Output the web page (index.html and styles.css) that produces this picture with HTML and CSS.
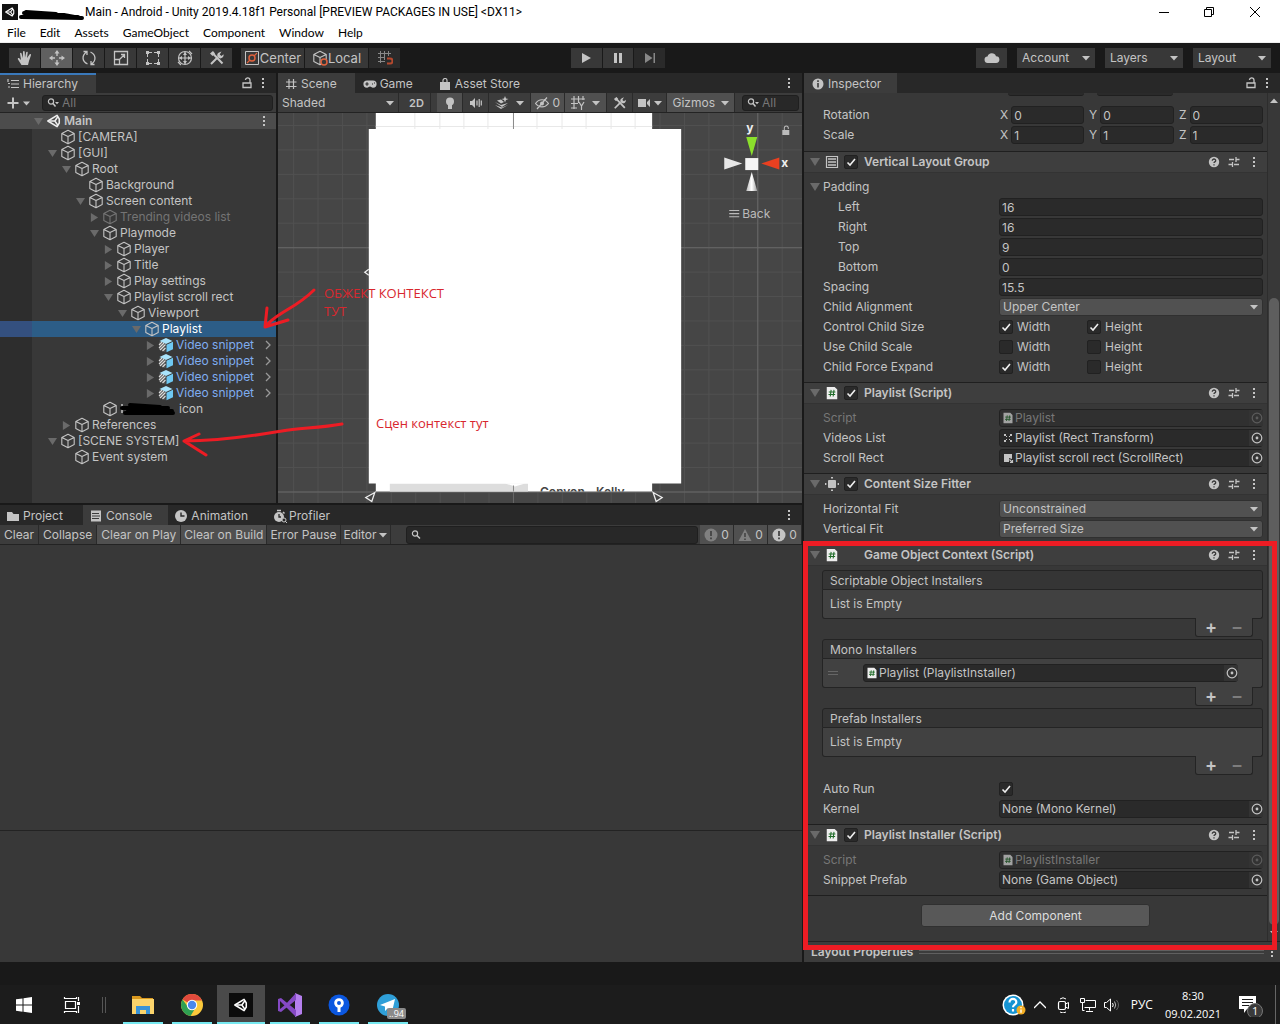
FILE: index.html
```html
<!DOCTYPE html>
<html lang="en">
<head>
<meta charset="utf-8">
<title>Main - Android - Unity 2019.4.18f1 Personal</title>
<link rel="stylesheet" href="styles.css">
</head>
<body>
<svg class="defs" aria-hidden="true">
  <defs>
    <symbol id="cube" viewBox="0 0 16 16"><path d="M8 1.200 14.200 4.400v7.200L8 14.800 1.800 11.600V4.400zM1.800 4.400 8 7.600l6.200-3.200M8 7.600v7.200" fill="none" stroke="currentColor" stroke-width="1.100" stroke-linejoin="round"/></symbol>
    <symbol id="prefab" viewBox="0 0 16 16"><path d="M8 1 14.500 4 8 7 1.500 4z" fill="#a9e3fb"/><path d="M8.500 7.800 15 4.800v7.400l-6.500 3z" fill="#6fc8f2"/><path d="M1 5l6.500 3v7.200L1 12.200z" fill="#555"/><path d="M1 8l3-3M1 11l5-5M2 13l5.500-5.500M4.500 14l3-3" stroke="#ddd" stroke-width="1.100"/></symbol>
    <symbol id="unity" viewBox="0 0 16 16"><path d="M1 8 11.500 1.500 14 5.500v5L11.500 14.500z" fill="none" stroke="currentColor" stroke-width="1.800" stroke-linejoin="round"/><path d="M3 8h6M9 8l3.500-5M9 8l3.500 5" stroke="currentColor" stroke-width="1.800"/></symbol>
    <symbol id="down" viewBox="0 0 10 10"><path d="M0 1h10L5 9z" fill="currentColor"/></symbol>
    <symbol id="right" viewBox="0 0 10 10"><path d="M1 0v10l8-5z" fill="currentColor"/></symbol>
    <symbol id="caret" viewBox="0 0 8 8"><path d="M0 2h8L4 6.500z" fill="currentColor"/></symbol>
    <symbol id="dots" viewBox="0 0 4 12"><path d="M1 1h2v2H1zM1 5h2v2H1zM1 9h2v2H1z" fill="currentColor"/></symbol>
    <symbol id="lock" viewBox="0 0 12 12"><path d="M2 6h8v4.500H2zM9 6V3.500a2.300 2.300 0 0 0-4.600-.5" fill="none" stroke="currentColor" stroke-width="1.300"/></symbol>
    <symbol id="help" viewBox="0 0 12 12"><circle cx="6" cy="6" r="5.200" fill="currentColor"/><path d="M4.300 4.700c0-2.300 3.500-2.200 3.400 0 0 1.200-1.700 1.200-1.700 2.300M6 8.200v1.300" fill="none" stroke="#3a3a3a" stroke-width="1.300"/></symbol>
    <symbol id="sliders" viewBox="0 0 12 12"><path d="M1 3.500h5M8 3.500h3.500M8 1v5M.5 8.500h4M6 8.500h5M4.500 6v5" stroke="currentColor" stroke-width="1.300"/></symbol>
    <symbol id="script" viewBox="0 0 14 16"><path d="M1 1h9l3 3v11H1z" fill="#eee"/><path d="M6 4.500l-1 7.500M9.300 4.500l-1 7.500M3.300 6.800h7.600M3 9.800h7.600" stroke="#1f6b28" stroke-width="1.200"/></symbol>
    <symbol id="target" viewBox="0 0 12 12"><circle cx="6" cy="6" r="4.800" fill="none" stroke="currentColor" stroke-width="1.200"/><circle cx="6" cy="6" r="1.400" fill="currentColor"/></symbol>
    <symbol id="search" viewBox="0 0 12 12"><circle cx="4" cy="4.500" r="2.600" fill="none" stroke="currentColor" stroke-width="1.200"/><path d="M6 6.500l3 3" stroke="currentColor" stroke-width="1.500"/></symbol>
    <symbol id="searchd" viewBox="0 0 12 12"><circle cx="4" cy="4.500" r="2.600" fill="none" stroke="currentColor" stroke-width="1.200"/><path d="M6 6.500l2.500 3" stroke="currentColor" stroke-width="1.500"/><path d="M8 5h4l-2 2.200z" fill="currentColor"/></symbol>
    <symbol id="tools" viewBox="0 0 16 16"><path d="M2 14 9 7M3 2.500l10.500 11" stroke="currentColor" stroke-width="2"/><path d="M10 2.500a3.200 3.200 0 0 0-1.500 4l1.500 1.500a3.200 3.200 0 0 0 4.500-3.800l-2 1.800-1.800-1.500L12.500 1.500z" fill="currentColor"/><path d="M1 3.500 4 1l2 2.500L3.500 6z" fill="currentColor"/></symbol>
    <symbol id="hash" viewBox="0 0 12 12"><path d="M4 1v10M8.500 1v10M1 4h10.500M1 8.500h10.500" stroke="currentColor" stroke-width="1.200"/></symbol>
    <symbol id="log" viewBox="0 0 14 14"><circle cx="7" cy="7" r="6.500" fill="currentColor"/><path d="M7 3v5M7 9.500v1.700" stroke="#444" stroke-width="1.800"/></symbol>
  </defs>
</svg>

<div class="app">
  <header class="titlebar">
    <svg class="app-icon" viewBox="0 0 16 16"><path d="M0 0h16v16H0z" fill="#111"/><use href="#unity" x="3" y="3" width="10" height="10" color="#fff"/></svg>
    <svg class="scribble" viewBox="0 0 66 16"><path d="M3 13l61 1M6 9l40 2 16 3M8 8l30 2M6 12l54 1" fill="none" stroke="#000" stroke-width="4" stroke-linecap="round"/></svg>
    <h1>Main - Android - Unity 2019.4.18f1 Personal [PREVIEW PACKAGES IN USE] &lt;DX11&gt;</h1>
    <div class="window-buttons">
      <button aria-label="Minimize"><svg viewBox="0 0 12 12"><path d="M1 6.500h10" stroke="#000"/></svg></button>
      <button aria-label="Restore"><svg viewBox="0 0 12 12"><path d="M1.500 3.500h7v7h-7zM3.500 3V1.500h7v7H9" fill="none" stroke="#000"/></svg></button>
      <button aria-label="Close"><svg viewBox="0 0 12 12"><path d="M1 1l10 10M11 1L1 11" stroke="#000"/></svg></button>
    </div>
  </header>
  <nav class="menubar">
    <button>File</button><button>Edit</button><button>Assets</button><button>GameObject</button><button>Component</button><button>Window</button><button>Help</button>
  </nav>

  <div class="toolbar">
    <div class="tool-group">
      <button class="tool" aria-label="Hand"><svg viewBox="0 0 16 16"><path d="M4.500 15 1 9.500c-.8-1.300.7-2 1.500-1L4 10 3 3.500c0-1 1.300-1.200 1.600 0L5.800 8 6 1.800c.1-1.200 1.600-1.200 1.700 0L8 7.500l1.200-5.200c.4-1.100 1.700-.7 1.500.4L10 8l2.500-3.500c.8-.9 1.900-.1 1.400.9L12 11l-1 4z" fill="currentColor"/></svg></button>
      <button class="tool on" aria-label="Move"><svg viewBox="0 0 16 16"><path d="M8 0l2.500 3.500h-5zM8 16l2.500-3.500h-5zM0 8l3.500-2.500v5zM16 8l-3.500-2.500v5z" fill="currentColor"/><path d="M8 3v3M8 10v3M3 8h3M10 8h3" stroke="currentColor" stroke-width="1.400"/></svg></button>
      <button class="tool" aria-label="Rotate"><svg viewBox="0 0 16 16"><path d="M6.500 14C1 11.500.5 5.500 5.500 2M9.500 2c5.500 2.500 6 8.500 1 12M2.500 1.500h3.500v3.500M13.500 14.500H10V11" fill="none" stroke="currentColor" stroke-width="1.300"/></svg></button>
      <button class="tool" aria-label="Scale"><svg viewBox="0 0 16 16"><path d="M1.500 1.500h13v13h-13zM1.500 9.500h5v5M6.500 9.500l5-5M8 4.500h3.500V8" fill="none" stroke="currentColor" stroke-width="1.300"/></svg></button>
      <button class="tool" aria-label="Rect"><svg viewBox="0 0 16 16"><path d="M4 2.500h8M4 13.500h8M2.500 4v8M13.500 4v8" stroke="currentColor" stroke-dasharray="3 2"/><path d="M1 1h3v3H1zM12 1h3v3h-3zM1 12h3v3H1zM12 12h3v3h-3z" fill="currentColor"/></svg></button>
      <button class="tool" aria-label="Transform"><svg viewBox="0 0 16 16"><circle cx="8" cy="8" r="6.500" fill="none" stroke="currentColor" stroke-width="1.200"/><path d="M8 2v12M2 8h12M1 12l3 3M12 1l3 3" stroke="currentColor" stroke-width="1.200"/><path d="M8 2l2 3H6zM8 14l2-3H6zM2 8l3-2v4zM14 8l-3-2v4z" fill="currentColor"/></svg></button>
      <button class="tool" aria-label="Custom tools"><svg viewBox="0 0 16 16"><use href="#tools"/></svg></button>
      <button class="tool wide first">
        <svg viewBox="0 0 16 16"><path d="M1.500 1.500h13v13h-13z" fill="none" stroke="currentColor"/><circle cx="8" cy="8" r="3" fill="none" stroke="#e0623d" stroke-width="1.500"/><path d="M3 13l3-3M10 6l3-3" stroke="#e0623d" stroke-width="1.200"/></svg>Center</button>
      <button class="tool wide"><svg viewBox="0 0 16 16"><use href="#cube"/><circle cx="12" cy="12" r="3" fill="#383838" stroke="#e0623d" stroke-width="1.500"/></svg>Local</button>
      <button class="tool dim" aria-label="Snap"><svg viewBox="0 0 16 16"><path d="M3.500 1v12M7.500 1v9M11.500 1v5M1 3.500h13M1 7.500h7M1 11.500h7" stroke="currentColor"/><path d="M10 8.500h3a2.200 2.200 0 0 1 0 5h-3" fill="none" stroke="#b5492e" stroke-width="2"/></svg></button>
    </div>
    <div class="play-group">
      <button class="tool" aria-label="Play"><svg viewBox="0 0 16 16"><path d="M4 3l9 5-9 5z" fill="currentColor"/></svg></button>
      <button class="tool" aria-label="Pause"><svg viewBox="0 0 16 16"><path d="M4 3h3v10H4zM9 3h3v10H9z" fill="currentColor"/></svg></button>
      <button class="tool dim" aria-label="Step"><svg viewBox="0 0 16 16"><path d="M3 3l7.500 5L3 13zM11.500 3h1.500v10h-1.500z" fill="currentColor"/></svg></button>
    </div>
    <div class="account-group">
      <button class="tool" aria-label="Cloud"><svg viewBox="0 0 16 16"><path d="M4 13a3.200 3.200 0 0 1-.5-6.400 4.500 4.500 0 0 1 8.500-.4A3.400 3.400 0 0 1 12 13z" fill="currentColor"/></svg></button>
      <button class="drop">Account<svg class="caret"><use href="#caret"/></svg></button>
      <button class="drop">Layers<svg class="caret"><use href="#caret"/></svg></button>
      <button class="drop">Layout<svg class="caret"><use href="#caret"/></svg></button>
    </div>
  </div>

  <main class="workspace">
    <div class="left">
      <section class="panel hierarchy">
        <div class="tabs">
          <button class="tab active focus"><svg viewBox="0 0 12 12"><path d="M4 2.500h8M4 6h8M4 9.500h8M1 1v3M1 5.500h2M1 9h2" stroke="currentColor" stroke-width="1.200"/></svg>Hierarchy</button>
          <svg class="lock push"><use href="#lock"/></svg><svg class="dots"><use href="#dots"/></svg>
        </div>
        <div class="bar">
          <button class="add" aria-label="Create"><svg viewBox="0 0 24 12"><path d="M6 0.500v11M0.500 6h11" stroke="currentColor" stroke-width="2"/><path d="M16 4.500h7l-3.500 4z" fill="currentColor"/></svg></button>
          <label class="search"><svg><use href="#searchd"/></svg><input type="text" placeholder="All" aria-label="Search hierarchy"></label>
        </div>
        <ul class="tree">
          <li class="row scene d0"><svg class="fold"><use href="#down"/></svg><svg class="ico"><use href="#unity" x="1" y="1" width="14" height="14"/></svg><span>Main</span><svg class="dots push"><use href="#dots"/></svg></li>
          <li class="row d1"><i class="fold"></i><svg class="ico"><use href="#cube"/></svg><span>[CAMERA]</span></li>
          <li class="row d1"><svg class="fold"><use href="#down"/></svg><svg class="ico"><use href="#cube"/></svg><span>[GUI]</span></li>
          <li class="row d2"><svg class="fold"><use href="#down"/></svg><svg class="ico"><use href="#cube"/></svg><span>Root</span></li>
          <li class="row d3"><i class="fold"></i><svg class="ico"><use href="#cube"/></svg><span>Background</span></li>
          <li class="row d3"><svg class="fold"><use href="#down"/></svg><svg class="ico"><use href="#cube"/></svg><span>Screen content</span></li>
          <li class="row d4 off"><svg class="fold"><use href="#right"/></svg><svg class="ico"><use href="#cube"/></svg><span>Trending videos list</span></li>
          <li class="row d4"><svg class="fold"><use href="#down"/></svg><svg class="ico"><use href="#cube"/></svg><span>Playmode</span></li>
          <li class="row d5"><svg class="fold"><use href="#right"/></svg><svg class="ico"><use href="#cube"/></svg><span>Player</span></li>
          <li class="row d5"><svg class="fold"><use href="#right"/></svg><svg class="ico"><use href="#cube"/></svg><span>Title</span></li>
          <li class="row d5"><svg class="fold"><use href="#right"/></svg><svg class="ico"><use href="#cube"/></svg><span>Play settings</span></li>
          <li class="row d5"><svg class="fold"><use href="#down"/></svg><svg class="ico"><use href="#cube"/></svg><span>Playlist scroll rect</span></li>
          <li class="row d6"><svg class="fold"><use href="#down"/></svg><svg class="ico"><use href="#cube"/></svg><span>Viewport</span></li>
          <li class="row d7 selected"><svg class="fold"><use href="#down"/></svg><svg class="ico"><use href="#cube"/></svg><span>Playlist</span></li>
          <li class="row d8 prefab"><svg class="fold"><use href="#right"/></svg><svg class="ico"><use href="#prefab"/></svg><span>Video snippet</span><svg class="enter push" viewBox="0 0 8 10"><path d="M2 1l4 4-4 4" fill="none" stroke="currentColor" stroke-width="1.300"/></svg></li>
          <li class="row d8 prefab"><svg class="fold"><use href="#right"/></svg><svg class="ico"><use href="#prefab"/></svg><span>Video snippet</span><svg class="enter push" viewBox="0 0 8 10"><path d="M2 1l4 4-4 4" fill="none" stroke="currentColor" stroke-width="1.300"/></svg></li>
          <li class="row d8 prefab"><svg class="fold"><use href="#right"/></svg><svg class="ico"><use href="#prefab"/></svg><span>Video snippet</span><svg class="enter push" viewBox="0 0 8 10"><path d="M2 1l4 4-4 4" fill="none" stroke="currentColor" stroke-width="1.300"/></svg></li>
          <li class="row d8 prefab"><svg class="fold"><use href="#right"/></svg><svg class="ico"><use href="#prefab"/></svg><span>Video snippet</span><svg class="enter push" viewBox="0 0 8 10"><path d="M2 1l4 4-4 4" fill="none" stroke="currentColor" stroke-width="1.300"/></svg></li>
          <li class="row d4"><i class="fold"></i><svg class="ico"><use href="#cube"/></svg><svg class="smudge" viewBox="0 0 56 16"><path d="M2 3v9" stroke="#c4c4c4" stroke-width="1.500"/><path d="M2 7h46M10 4l30 2M5 12h48M8 9l44 1" fill="none" stroke="#000" stroke-width="4" stroke-linecap="round"/></svg><span>icon</span></li>
          <li class="row d2"><svg class="fold"><use href="#right"/></svg><svg class="ico"><use href="#cube"/></svg><span>References</span></li>
          <li class="row d1"><svg class="fold"><use href="#down"/></svg><svg class="ico"><use href="#cube"/></svg><span>[SCENE SYSTEM]</span></li>
          <li class="row d2"><i class="fold"></i><svg class="ico"><use href="#cube"/></svg><span>Event system</span></li>
        </ul>
      </section>

      <section class="panel scene-view">
        <div class="tabs">
          <button class="tab active"><svg><use href="#hash"/></svg>Scene</button>
          <button class="tab game"><svg viewBox="0 0 14 12"><path d="M4 2.500h6a3.600 3.600 0 0 1 0 7.200c-1.500 0-2-1.200-3-1.200s-1.500 1.200-3 1.200a3.600 3.600 0 0 1 0-7.200z" fill="currentColor"/><path d="M4 4.300v3.400M2.300 6h3.400M9 6h1M11 5h1" stroke="#282828" stroke-width="1.200"/></svg>Game</button>
          <button class="tab store"><svg viewBox="0 0 12 12"><path d="M1 4h10v8H1z" fill="currentColor"/><path d="M4 5V2.500a2 2 0 0 1 4 0V5" fill="none" stroke="currentColor" stroke-width="1.200"/></svg>Asset Store</button>
          <svg class="dots push"><use href="#dots"/></svg>
        </div>
        <div class="bar scene-bar">
          <button class="seg shaded">Shaded<svg class="caret"><use href="#caret"/></svg></button>
          <button class="seg two-d">2D</button>
          <button class="seg w26 on" aria-label="Lighting"><svg viewBox="0 0 14 14"><circle cx="7" cy="5.500" r="4" fill="currentColor"/><path d="M5 8h4v5H5z" fill="currentColor"/></svg></button>
          <button class="seg w26" aria-label="Audio"><svg viewBox="0 0 14 14"><path d="M1 5h2l3-3v10L3 9H1z" fill="currentColor"/><path d="M8 4.500v5M10.200 3v8M12.300 4.500v5" stroke="currentColor" stroke-width="1.200"/></svg></button>
          <button class="seg w42" aria-label="Effects"><svg viewBox="0 0 14 14"><path d="M0 6l6 3 7-2-6 4zM0 9l6 4 7-4-6 2.500zM2 4.500l4-1 3 2.500-3 1.500z" fill="currentColor"/><path d="M10 0l1 2.500L13.500 3 11 4l-1 2.500L9 4 6.500 3 9 2.500z" fill="currentColor"/></svg><svg class="caret"><use href="#caret"/></svg></button>
          <button class="seg w34 on">
            <svg viewBox="0 0 14 14"><path d="M0.500 7.500C4 2.500 10 2.500 13.500 7.500 10 12 4 12 .5 7.500zM2 13L12 1.500" fill="none" stroke="currentColor" stroke-width="1.200"/><circle cx="7" cy="7.500" r="2" fill="currentColor"/></svg>0</button>
          <button class="seg w42 on" aria-label="Grid"><svg viewBox="0 0 14 14"><path d="M3 0v13M7.500 0v7M12 0v4M0 3h14M0 7.500h7M0 12h6M8 6l2.500 4L13 6M10.500 10v4" fill="none" stroke="currentColor" stroke-width="1.200"/></svg><svg class="caret"><use href="#caret"/></svg></button>
          <button class="seg w26" aria-label="Tools"><svg viewBox="0 0 16 16"><use href="#tools"/></svg></button>
          <button class="seg w34" aria-label="Camera"><svg viewBox="0 0 14 14"><path d="M1 3h8v8H1zM10 6l3-3v8l-3-3z" fill="currentColor"/></svg><svg class="caret"><use href="#caret"/></svg></button>
          <button class="seg gizmos on">Gizmos<svg class="caret"><use href="#caret"/></svg></button>
          <label class="search"><svg><use href="#searchd"/></svg><input type="text" placeholder="All" aria-label="Search scene"></label>
        </div>
        <div class="canvas">
          <svg viewBox="0 0 524 390" preserveAspectRatio="xMidYMin slice">
            <defs>
              <pattern id="minor" x="-9" y="12" width="24.400" height="24.400" patternUnits="userSpaceOnUse"><path d="M.5 0v24.400M0 .5h24.400" stroke="#505050"/></pattern>
              <clipPath id="lower"><path d="M98 370h276v8H98z"/></clipPath>
              <linearGradient id="cone"><stop offset="0" stop-color="#bbb"/><stop offset=".5" stop-color="#fff"/><stop offset="1" stop-color="#999"/></linearGradient>
            </defs>
            <path d="M0 0h524v390H0z" fill="#464646"/>
            <path d="M0 0h524v390H0z" fill="url(#minor)"/>
            <path d="M235.500 0v390M479.500 0v390M0 134.500h524M0 378.500h524" stroke="#686868"/>
            <path d="M98 0h276v378H98z" fill="#fff"/>
            <path d="M137 0v16M162 0v16M186 0v16M210 0v16M259 0v16M284 0v16M308 0v16M333 0v16M357 0v16M98 13.500h276" stroke="#e8e8e8"/>
            <path d="M235.500 0v16" stroke="#888"/>
            <path d="M112 370h138v8H112z" fill="#ddd"/>
            <path d="M227 370h20l-10 3z" fill="#fff"/>
            <path d="M235.500 372v6" stroke="#888"/>
            <g clip-path="url(#lower)" fill="#444" font-family="Inter, sans-serif" font-size="12" font-weight="600"><text x="262" y="383">Conyon</text><text x="318" y="383">Kelly</text></g>
            <path d="M91 16h312v354H91z" fill="#fff"/>
            <path d="M97 379l-9 5 6 4zM375 379l9 5-6 4zM91 156l-4 3 4 3" fill="none" stroke="#eee" stroke-width="1.300"/>
            <path d="M468 24h11l-5.500 19z" fill="#8be02c"/><path d="M483 50.500l18-6v12z" fill="#ea4020"/>
            <path d="M464 50.500l-18-6v12z" fill="#e6e6e6"/><path d="M473.500 59l5.500 19h-11z" fill="url(#cone)"/><path d="M467 45h13v12h-13z" fill="#f4f4f4"/>
            <g fill="#eee" font-family="Inter, sans-serif" font-size="12" font-weight="700"><text x="468" y="19">y</text><text x="503" y="54">x</text></g>
            <path d="M504 17h7v5h-7z" fill="#bbb"/><path d="M506 17v-2a2 2 0 0 1 4 0v1" fill="none" stroke="#bbb"/>
            <path d="M451 97.500h10M451 100.500h10M451 103.500h10" stroke="#bbb"/>
            <text x="464" y="105" fill="#bbb" font-family="Inter, sans-serif" font-size="12">Back</text>
          </svg>
        </div>
      </section>

      <section class="panel console">
        <div class="tabs">
          <button class="tab project"><svg viewBox="0 0 12 12"><path d="M0 2h5l1.500 2H12v7H0z" fill="currentColor"/></svg>Project</button>
          <button class="tab active log"><svg viewBox="0 0 12 12"><path d="M1 .5h10v11H1z" fill="currentColor"/><path d="M2 3.500h7M2 6h8M2 8.500h7" stroke="#3c3c3c"/></svg>Console</button>
          <button class="tab anim"><svg viewBox="0 0 12 12"><circle cx="6" cy="6" r="6" fill="currentColor"/><path d="M6 2.500V6h3.500" fill="none" stroke="#282828" stroke-width="1.400"/></svg>Animation</button>
          <button class="tab prof"><svg viewBox="0 0 14 14"><circle cx="6" cy="8" r="5" fill="currentColor"/><path d="M4 1.500h4M10 3l1.500 1.500" stroke="currentColor" stroke-width="1.500"/><path d="M6 5v3h2" fill="none" stroke="#282828" stroke-width="1.300"/><circle cx="11" cy="11" r="2" fill="#282828" stroke="currentColor"/><path d="M12 12l2 2" stroke="currentColor"/></svg>Profiler</button>
          <svg class="dots push"><use href="#dots"/></svg>
        </div>
        <div class="bar console-bar">
          <button class="seg">Clear</button><button class="seg">Collapse</button><button class="seg on">Clear on Play</button><button class="seg on">Clear on Build</button><button class="seg">Error Pause</button><button class="seg">Editor<svg class="caret"><use href="#caret"/></svg></button>
          <label class="search"><svg><use href="#search"/></svg><input type="text" aria-label="Search console"></label>
          <button class="seg count on"><svg class="faded"><use href="#log"/></svg>0</button>
          <button class="seg count on"><svg class="faded" viewBox="0 0 14 14"><path d="M7 1l6.500 12H.5z" fill="currentColor"/><path d="M7 5v4M7 10.500V12" stroke="#444" stroke-width="1.600"/></svg>0</button>
          <button class="seg count on"><svg><use href="#log"/></svg>0</button>
        </div>
        <div class="entries"></div>
        <div class="detail"></div>
      </section>
    </div>

    <section class="panel inspector">
      <div class="tabs">
        <button class="tab active"><svg viewBox="0 0 12 12"><circle cx="6" cy="6" r="5.500" fill="currentColor"/><path d="M6 5v4.500M6 2.300V4" stroke="#3c3c3c" stroke-width="1.600"/></svg>Inspector</button>
        <svg class="lock push"><use href="#lock"/></svg><svg class="dots"><use href="#dots"/></svg>
      </div>
      <div class="scroller">
        <div class="components">
          <div class="cut"><i></i><i></i></div>
          <div class="transform">
            <div class="field"><span>Rotation</span><div class="xyz"><label>X<input value="0"></label><label>Y<input value="0"></label><label>Z<input value="0"></label></div></div>
            <div class="field"><span>Scale</span><div class="xyz"><label>X<input value="1"></label><label>Y<input value="1"></label><label>Z<input value="1"></label></div></div>
          </div>

          <div class="comp-head"><svg class="fold"><use href="#down"/></svg><svg class="kind" viewBox="0 0 14 14"><path d="M1.500 1.500h11v11h-11z" fill="none" stroke="currentColor" stroke-width="1.200"/><path d="M3 4h8M3 7h8M3 10h8" stroke="currentColor" stroke-width="1.600"/></svg><input type="checkbox" checked aria-label="Vertical Layout Group enabled"><h2>Vertical Layout Group</h2><svg class="act"><use href="#help"/></svg><svg class="act"><use href="#sliders"/></svg><svg class="dots"><use href="#dots"/></svg></div>
          <div class="comp-body">
            <div class="field group"><svg class="fold"><use href="#down"/></svg><span>Padding</span></div>
            <div class="field sub"><label for="pl">Left</label><input id="pl" value="16"></div>
            <div class="field sub"><label for="pr">Right</label><input id="pr" value="16"></div>
            <div class="field sub"><label for="pt">Top</label><input id="pt" value="9"></div>
            <div class="field sub"><label for="pb">Bottom</label><input id="pb" value="0"></div>
            <div class="field"><label for="sp">Spacing</label><input id="sp" value="15.5"></div>
            <div class="field"><label for="al">Child Alignment</label><select id="al"><option>Upper Center</option></select></div>
            <div class="field"><span>Control Child Size</span><div class="checks"><label><input type="checkbox" checked>Width</label><label><input type="checkbox" checked>Height</label></div></div>
            <div class="field"><span>Use Child Scale</span><div class="checks"><label><input type="checkbox">Width</label><label><input type="checkbox">Height</label></div></div>
            <div class="field"><span>Child Force Expand</span><div class="checks"><label><input type="checkbox" checked>Width</label><label><input type="checkbox">Height</label></div></div>
          </div>

          <div class="comp-head"><svg class="fold"><use href="#down"/></svg><svg class="kind"><use href="#script"/></svg><input type="checkbox" checked aria-label="Playlist enabled"><h2>Playlist (Script)</h2><svg class="act"><use href="#help"/></svg><svg class="act"><use href="#sliders"/></svg><svg class="dots"><use href="#dots"/></svg></div>
          <div class="comp-body">
            <div class="field disabled"><span>Script</span><div class="object"><svg><use href="#script"/></svg>Playlist<button aria-label="Pick"><svg><use href="#target"/></svg></button></div></div>
            <div class="field"><span>Videos List</span><div class="object"><svg viewBox="0 0 12 12"><path d="M2 2h2v2H2zM8 2h2v2H8zM2 8h2v2H2zM8 8h2v2H8zM4 4h1v1H4zM7 4h1v1H7zM4 7h1v1H4zM7 7h1v1H7z" fill="currentColor"/></svg>Playlist (Rect Transform)<button aria-label="Pick"><svg><use href="#target"/></svg></button></div></div>
            <div class="field"><span>Scroll Rect</span><div class="object"><svg viewBox="0 0 12 12"><path d="M2 2h8v5L7 6v4H2z" fill="currentColor"/><path d="M7.500 7.500L10 10M10.500 8v2.500H8" stroke="currentColor" fill="none" stroke-width="1.200"/></svg>Playlist scroll rect (ScrollRect)<button aria-label="Pick"><svg><use href="#target"/></svg></button></div></div>
          </div>

          <div class="comp-head"><svg class="fold"><use href="#down"/></svg><svg class="kind" viewBox="0 0 14 14"><rect x="3" y="3" width="8" height="8" rx="1" fill="currentColor"/><path d="M6 .7h2M6 13.300h2M.7 6v2M13.300 6v2" stroke="currentColor" stroke-width="1.400"/></svg><input type="checkbox" checked aria-label="Content Size Fitter enabled"><h2>Content Size Fitter</h2><svg class="act"><use href="#help"/></svg><svg class="act"><use href="#sliders"/></svg><svg class="dots"><use href="#dots"/></svg></div>
          <div class="comp-body">
            <div class="field"><label for="hf">Horizontal Fit</label><select id="hf"><option>Unconstrained</option></select></div>
            <div class="field"><label for="vf">Vertical Fit</label><select id="vf"><option>Preferred Size</option></select></div>
          </div>

          <div class="comp-head"><svg class="fold"><use href="#down"/></svg><svg class="kind"><use href="#script"/></svg><i class="no-check"></i><h2>Game Object Context (Script)</h2><svg class="act"><use href="#help"/></svg><svg class="act"><use href="#sliders"/></svg><svg class="dots"><use href="#dots"/></svg></div>
          <div class="comp-body">
            <div class="list"><h3>Scriptable Object Installers</h3><div class="items">List is Empty</div><div class="list-foot"><button>+</button><button disabled>−</button></div></div>
            <div class="list"><h3>Mono Installers</h3><div class="items"><i class="grip"></i><div class="object"><svg><use href="#script"/></svg>Playlist (PlaylistInstaller)<button aria-label="Pick"><svg><use href="#target"/></svg></button></div></div><div class="list-foot"><button>+</button><button disabled>−</button></div></div>
            <div class="list"><h3>Prefab Installers</h3><div class="items">List is Empty</div><div class="list-foot"><button>+</button><button disabled>−</button></div></div>
            <div class="field auto-run"><label for="ar">Auto Run</label><input id="ar" type="checkbox" checked></div>
            <div class="field"><span>Kernel</span><div class="object">None (Mono Kernel)<button aria-label="Pick"><svg><use href="#target"/></svg></button></div></div>
          </div>

          <div class="comp-head"><svg class="fold"><use href="#down"/></svg><svg class="kind"><use href="#script"/></svg><input type="checkbox" checked aria-label="Playlist Installer enabled"><h2>Playlist Installer (Script)</h2><svg class="act"><use href="#help"/></svg><svg class="act"><use href="#sliders"/></svg><svg class="dots"><use href="#dots"/></svg></div>
          <div class="comp-body">
            <div class="field disabled"><span>Script</span><div class="object"><svg><use href="#script"/></svg>PlaylistInstaller<button aria-label="Pick"><svg><use href="#target"/></svg></button></div></div>
            <div class="field"><span>Snippet Prefab</span><div class="object">None (Game Object)<button aria-label="Pick"><svg><use href="#target"/></svg></button></div></div>
          </div>
          <div class="add-row"><button class="add-component">Add Component</button></div>
        </div>
        <div class="scrollbar"><svg viewBox="0 0 8 8"><path d="M0 6h8L4 1.500z" fill="currentColor"/></svg><i></i><svg viewBox="0 0 8 8"><use href="#caret"/></svg></div>
      </div>
      <div class="preview"><h2>Layout Properties</h2><i></i><svg class="dots"><use href="#dots"/></svg></div>
      <div class="highlight"></div>
    </section>
  </main>

  <div class="status"></div>

  <footer class="taskbar">
    <button class="task" aria-label="Start"><svg viewBox="0 0 24 24"><path d="M4 6.300l6.500-.9v6H4zM11.500 5.200L20 4v7.400h-8.500zM4 12.600h6.500v6.100L4 17.800zM11.500 12.600H20V20l-8.500-1.200z" fill="#fff"/></svg></button>
    <button class="task" aria-label="Task view"><svg viewBox="0 0 24 24"><path d="M5.500 8.500h10v7h-10zM4.500 4v1.500h12V4M4.500 20v-1.500h12V20M18.500 4v4M18.500 13v7" fill="none" stroke="#fff" stroke-width="1.200"/><path d="M17 9h3v3h-3z" fill="#fff"/></svg></button>
    <i class="sep"></i>
    <button class="task running" aria-label="Explorer"><svg viewBox="0 0 24 24"><path d="M1 3h8l2 2h11v4H1z" fill="#d9981e"/><path d="M1 6h22v15H1z" fill="#fbd46b"/><path d="M5 13h14v8h-4v-4H9v4H5z" fill="#3a93d6"/></svg></button>
    <button class="task running" aria-label="Chrome"><svg viewBox="0 0 24 24"><circle cx="12" cy="12" r="11" fill="#fbc93b"/><path d="M12 12L2.500 6.500a11 11 0 0 1 19.500 1H12z" fill="#e14a3d"/><path d="M2.500 6.500a11 11 0 0 0 8 16.400L16 14l-8 0z" fill="#2fa052"/><circle cx="12" cy="12" r="5.200" fill="#fff"/><circle cx="12" cy="12" r="4.200" fill="#4a88ec"/></svg></button>
    <button class="task running current" aria-label="Unity"><svg viewBox="0 0 24 24"><path d="M0 0h24v24H0z" fill="#0c0c0c"/><use href="#unity" x="5" y="5" width="14" height="14" color="#fff"/></svg></button>
    <button class="task running" aria-label="Visual Studio"><svg viewBox="0 0 24 24"><path d="M17 0l7 3v18l-7 3z" fill="#b57fee"/><path d="M0 6l3-1 15 12v7L2 8v8l5-4 11-12v7L3 19l-3-1z" fill="#8549c4"/></svg></button>
    <button class="task running" aria-label="Sourcetree"><svg viewBox="0 0 24 24"><circle cx="12" cy="12" r="10.500" fill="#0b57e0"/><circle cx="12" cy="10" r="3.400" fill="none" stroke="#fff" stroke-width="2.800"/><path d="M12 13v6" stroke="#fff" stroke-width="3"/></svg></button>
    <button class="task running" aria-label="Telegram"><svg viewBox="0 0 24 24"><circle cx="12" cy="12" r="11" fill="#2f9fd8"/><path d="M4 12l15-6-3 13-4.500-3.500L9 18v-4.500z" fill="#fff"/></svg><span class="badge">..94</span></button>
    <div class="tray">
      <svg class="t24" viewBox="0 0 24 24"><circle cx="11" cy="12" r="10.500" fill="#fff"/><circle cx="11" cy="12" r="9" fill="#1593d2"/><path d="M7.500 9.500c0-5 7-4.500 6.800-.3 0 2.500-3.300 2.500-3.300 5M11 16v2.500" fill="none" stroke="#fff" stroke-width="2.200"/><circle cx="19" cy="17" r="4.500" fill="#f4ae24"/><path d="M19 14v1.200M19 16.500v3.200" stroke="#fff" stroke-width="1.400"/></svg>
      <svg class="t12" viewBox="0 0 12 12"><path d="M0 9l6-6 6 6" fill="none" stroke="#fff" stroke-width="1.300"/></svg>
      <svg class="t16" viewBox="0 0 16 16"><rect x="2.500" y="4.500" width="7" height="8" rx="1.500" fill="none" stroke="#fff" stroke-width="1.200"/><path d="M9.500 7l3-1.500v6l-3-1.500M4 2q3-2.500 6 0M4 15q3 2 6 0" fill="none" stroke="#fff"/></svg>
      <svg class="t16" viewBox="0 0 16 16"><path d="M5.500 3.500h10v7h-11M9.500 10.500v3M6 14.500h7M.5 1.500h4v4h-4zM2.500 5.500v8h2" fill="none" stroke="#fff"/></svg>
      <svg class="t16" viewBox="0 0 16 16"><path d="M.5 5.500h2l4-3.500v12l-4-3.500h-2z" fill="none" stroke="#fff"/><path d="M8.500 6q1.500 2 0 4" fill="none" stroke="#fff"/><path d="M10.500 4.500q2.500 3.500 0 7" fill="none" stroke="#bbb"/><path d="M12.500 3q4 5 0 10" fill="none" stroke="#666"/></svg>
      <span class="lang">РУС</span>
      <time class="clock"><span>8:30</span><span>09.02.2021</span></time>
      <svg class="t24 note" viewBox="0 0 24 24"><path d="M0 3h17v13H8l-3 4v-4H0z" fill="#fff"/><path d="M3 6.500h11M3 9.500h11M3 12.500h7" stroke="#1c1c1c"/><circle cx="16" cy="18" r="7.500" fill="#3a3a3a" stroke="#777"/><text x="13" y="22" font-family="Open Sans, sans-serif" font-size="11" fill="#fff">1</text></svg>
      <i class="peek"></i>
    </div>
  </footer>

  <svg class="marks" viewBox="0 0 500 500" aria-hidden="true">
    <path d="M314 290C302 302 290 308 282 313S270 321 266 326M267 308L265 327L288 320" fill="none" stroke="#ed1c24" stroke-width="3" stroke-linecap="round" stroke-linejoin="round"/>
    <path d="M342 424C320 428 300 428 282 431S225 441 184 441M199 434L184 441L206 455" fill="none" stroke="#ed1c24" stroke-width="3" stroke-linecap="round" stroke-linejoin="round"/>
  </svg>
  <p class="remark object-note">ОБЖЕКТ КОНТЕКСТ<br>ТУТ</p>
  <p class="remark scene-note">Сцен контекст тут</p>
</div>
</body>
</html>
```
FILE: styles.css
```css
* { box-sizing: border-box; }

body {
  margin: 0;
  background: #191919;
  color: #c4c4c4;
  font: 12px/16px Inter, "Liberation Sans", sans-serif;
}

button, input, select {
  margin: 0;
  padding: 0;
  border: 0;
  border-radius: 0;
  background: none;
  color: inherit;
  font: inherit;
}

h1, h2, h3, p, ul { margin: 0; padding: 0; font: inherit; }
svg { display: block; flex: none; }
i { display: block; flex: none; }
.defs { position: absolute; width: 0; height: 0; }
.push { margin-left: auto; }

.app { position: relative; display: flex; flex-direction: column; min-height: 100vh; }

/* Window frame */
.titlebar, .menubar {
  display: flex;
  align-items: center;
  background: #fff;
  color: #000;
  font: 12px/16px Lato, "Open Sans", sans-serif;
}
.titlebar { height: 24px; padding: 0 2px; font-family: Roboto, "Open Sans", sans-serif; }
.app-icon { width: 16px; height: 16px; }
.scribble { width: 66px; height: 16px; margin-right: 1px; }
.window-buttons { display: flex; margin-left: auto; }
.window-buttons button { display: grid; place-items: center; width: 46px; height: 20px; }
.window-buttons button:first-child { width: 45px; }
.window-buttons svg { width: 12px; height: 12px; }
.menubar { height: 19px; gap: 14px; padding-left: 7px; border-bottom: 1px solid #eee; }

/* Main toolbar */
.toolbar {
  display: grid;
  grid-template-columns: 571fr 94px 615fr;
  align-items: center;
  height: 30px;
  background: #191919;
}
.tool-group, .play-group, .account-group { display: flex; gap: 1px; }
.tool-group { padding-left: 9px; }
.account-group { justify-content: flex-end; gap: 10px; padding-right: 9px; }
.tool {
  display: flex;
  align-items: center;
  justify-content: center;
  width: 31px;
  height: 20px;
  background: #383838;
}
.tool svg { width: 16px; height: 16px; }
.tool.on { background: #606060; }
.tool.dim { background: #2a2a2a; color: #888; }
.tool.wide { width: 63px; font-size: 13px; }
.tool.first { margin-left: 8px; }
.drop { display: flex; align-items: center; justify-content: space-between; width: 78px; height: 20px; padding: 0 5px; background: #383838; }
.caret { width: 8px; height: 8px; }

/* Panels */
.workspace { flex: 1; display: grid; grid-template-columns: 802fr 476fr; gap: 2px; }
.left { display: grid; grid-template-columns: 276fr 524fr; grid-template-rows: 430fr 456fr; gap: 2px; min-width: 0; }
.console { grid-column: 1 / -1; }
.panel { display: flex; flex-direction: column; min-width: 0; background: #383838; }
.tabs { display: flex; align-items: center; height: 20px; padding-right: 11px; background: #282828; }
.tab { display: flex; align-items: center; gap: 4px; height: 20px; padding: 2px 18px 0 7px; }
.tab svg { width: 12px; height: 12px; }
.tab.active { background: #3c3c3c; }
.tab.focus { border-top: 2px solid #3a79bb; padding-top: 0; }
.dots { width: 4px; height: 12px; }
.lock { width: 12px; height: 12px; margin-right: 8px; }

.bar { display: flex; align-items: center; height: 20px; background: #3c3c3c; border-bottom: 1px solid #232323; }
.add { padding: 0 11px 0 7px; }
.add svg { width: 24px; height: 12px; }
.search {
  display: flex;
  flex: 1;
  align-items: center;
  gap: 3px;
  min-width: 0;
  height: 16px;
  margin-right: 3px;
  padding-left: 4px;
  border: 1px solid #1f1f1f;
  border-radius: 3px;
  background: #282828;
}
.search svg { width: 12px; height: 12px; }
.search input { flex: 1; min-width: 0; outline: 0; }
.search ::placeholder { color: #777; opacity: 1; }

/* Hierarchy tree */
.tree { flex: 1; list-style: none; background: linear-gradient(90deg, #2d2d2d 32px, #383838 32px); }
.row { display: flex; align-items: center; height: 16px; padding-right: 4px; }
.fold { width: 10px; height: 10px; color: #6a6a6a; }
.row .fold { width: 9px; height: 9px; margin-right: 3px; }
.ico { width: 16px; height: 16px; margin-right: 2px; }
.enter { width: 8px; height: 10px; color: #999; }
.scene { background: #4c4c4c; font-weight: 600; }
.scene .dots { margin-right: 6px; }
.scene .ico { color: #eee; }
.off { color: #747474; }
.selected { background: linear-gradient(90deg, #34507f 32px, #2c5d87 32px); color: #fff; }
.selected .ico { color: #c4c4c4; }
.prefab { color: #7fadf0; }
.smudge { width: 56px; height: 16px; margin-right: 3px; }
.d0 { padding-left: 34px; }
.d1 { padding-left: 48px; }
.d2 { padding-left: 62px; }
.d3 { padding-left: 76px; }
.d4 { padding-left: 90px; }
.d5 { padding-left: 104px; }
.d6 { padding-left: 118px; }
.d7 { padding-left: 132px; }
.d8 { padding-left: 146px; }

/* Scene view */
.scene-view .tab { padding-right: 18px; }
.scene-view .tab.game { padding: 2px 26px 0 8px; gap: 3px; }
.game svg { width: 14px; }
.scene-view .tab.store { padding-left: 0; }
.seg { display: flex; align-items: center; justify-content: space-evenly; height: 19px; border-right: 1px solid #2a2a2a; white-space: nowrap; }
.seg svg { width: 14px; height: 14px; }
.seg svg.caret { width: 8px; height: 8px; }
.seg.on { background: #505050; }
.shaded { justify-content: space-between; width: 121px; padding: 0 4px; }
.two-d { width: 32px; margin-right: 6px; padding-left: 4px; font-size: 11px; font-weight: 600; }
.w26 { width: 26px; }
.w34 { width: 34px; }
.w42 { width: 42px; }
.gizmos { width: 68px; margin-right: 7px; }
.canvas { position: relative; flex: 1; overflow: hidden; background: #464646; }
.canvas svg { position: absolute; inset: 0; width: 100%; height: 100%; }

/* Console */
.console .tab.project { padding-right: 20px; }
.console .tab.log { padding-right: 16px; }
.console .tab.prof svg { width: 14px; height: 14px; }
.console .tab.prof { gap: 2px; }
.console-bar .seg { padding: 0 4px; gap: 2px; }
.console-bar .seg:nth-child(n+4) { padding: 0 3px; }
.console-bar .search { height: 18px; margin: 0 2px 0 15px; }
.console-bar .count { width: 34px; }
.faded { color: #808080; }
.entries { flex: 285; border-bottom: 1px solid #232323; }
.detail { flex: 131; }

/* Inspector */
.inspector { position: relative; }
.inspector .tab { padding: 2px 16px 0 8px; }
.scroller { display: flex; flex: 1; }
.components { flex: 1; min-width: 0; }
.cut { display: flex; gap: 13px; height: 12px; padding-left: 204px; }
.cut i { width: 76px; height: 3px; border-radius: 0 0 3px 3px; background: #2a2a2a; border-bottom: 1px solid #1f1f1f; }
.transform { padding-bottom: 6px; }
.field { display: grid; grid-template-columns: 176px 1fr; align-items: center; height: 20px; padding: 0 4px 0 19px; }
.field.sub { padding-left: 34px; grid-template-columns: 161px 1fr; }
.field.group { display: flex; gap: 3px; padding-left: 6px; }
.field.disabled { color: #777; }
.field.disabled .object { background: #303030; }
.field.disabled .object svg { opacity: 0.6; }
.field input:not([type="checkbox"]), .object {
  width: 100%;
  min-width: 0;
  height: 18px;
  padding: 0 2px;
  border: 1px solid #212121;
  border-radius: 3px;
  background: #2a2a2a;
}
.xyz { display: grid; grid-template-columns: 85px 86px 1fr; column-gap: 4px; }
.xyz label { display: flex; align-items: center; gap: 3px; padding-left: 1px; }
.xyz input { flex: 1; }
select {
  appearance: none;
  width: 100%;
  height: 18px;
  padding: 0 3px;
  border: 1px solid #303030;
  border-radius: 3px;
  background: #515151 url("data:image/svg+xml,%3Csvg xmlns='http://www.w3.org/2000/svg' viewBox='0 0 8 8'%3E%3Cpath d='M0 2h8L4 6.500z' fill='%23c4c4c4'/%3E%3C/svg%3E") right 4px center / 8px 8px no-repeat;
}
input[type="checkbox"] {
  appearance: none;
  display: block;
  flex: none;
  width: 14px;
  height: 14px;
  border: 1px solid #212121;
  border-radius: 2px;
  background: #2a2a2a;
}
input[type="checkbox"]:checked {
  background: #2a2a2a url("data:image/svg+xml,%3Csvg xmlns='http://www.w3.org/2000/svg' viewBox='0 0 12 12'%3E%3Cpath d='M2.500 6.500l2.500 2.500 5-6' fill='none' stroke='%23eee' stroke-width='1.600'/%3E%3C/svg%3E") center / 12px 12px no-repeat;
}
.checks { display: flex; }
.checks label { display: flex; align-items: center; gap: 4px; width: 88px; }
.object { display: flex; align-items: center; gap: 1px; white-space: nowrap; }
.field .object, .items .object { padding: 0 0 0 2px; }
.object svg { width: 12px; height: 12px; }
.object button { margin: 0 -1px 0 auto; padding: 2px 0 2px 2px; background: #333; }

.comp-head { display: flex; align-items: center; height: 22px; padding: 0 11px 0 6px; background: #3e3e3e; border-top: 1px solid #1f1f1f; border-bottom: 1px solid #333; }
.comp-head .kind { width: 14px; height: 14px; margin: 0 5px; }
.comp-head h2 { flex: 1; margin-left: 6px; font-weight: 600; }
.comp-head .act { width: 12px; height: 12px; margin-right: 8px; }
.comp-head .dots { margin-left: 4px; }
.no-check { width: 14px; }
.comp-body { padding: 4px 0 5px; }

.list { margin: 0 4px 2px 18px; }
.list h3 { height: 20px; padding: 2px 7px; border: 1px solid #242424; background: #353535; border-radius: 3px 3px 0 0; }
.items { display: flex; align-items: center; height: 29px; margin-bottom: -1px; padding: 0 7px; border: 1px solid #242424; border-top: 0; background: #414141; border-radius: 0 0 3px 3px; }
.items .object { width: auto; flex: 1; margin-right: 17px; }
.grip { width: 10px; height: 4px; margin: 0 25px 0 -2px; border: solid #666; border-width: 1px 0; }
.list-foot { position: relative; display: flex; justify-content: space-around; width: 58px; height: 19px; margin: 0 10px 0 auto; padding: 0 2px; border: 1px solid #242424; border-top: 0; border-radius: 0 0 3px 3px; background: #414141; }
.list-foot button { font-size: 18px; font-weight: 600; line-height: 14px; }
.list-foot button:disabled { color: #7d7d7d; }
.auto-run { margin-top: 4px; }
.add-row { display: flex; justify-content: center; padding: 8px 0 14px; border-top: 1px solid #1f1f1f; }
.add-component { width: 229px; height: 23px; border: 1px solid #303030; border-radius: 3px; background: #585858; color: #ddd; }
.scrollbar { display: flex; flex-direction: column; align-items: center; width: 13px; padding: 4px 0; border-left: 1px solid #2d2d2d; }
.scrollbar svg { width: 8px; height: 8px; }
.scrollbar i { flex: 1; width: 10px; margin: 193px 0 4px; border-radius: 5px; background: #5e5e5e; }
.preview { display: flex; align-items: center; gap: 6px; height: 21px; padding: 0 6px 0 7px; border-top: 1px solid #232323; background: #3c3c3c; }
.preview h2 { font-weight: 600; }
.preview i { flex: 1; height: 4px; border: solid #606060; border-width: 1px 0; }
.highlight { position: absolute; top: 468px; left: -1px; right: 3px; bottom: 12px; border: 5px solid #ed1c24; }

.status { height: 23px; background: #191919; }

/* Windows taskbar */
.taskbar { display: flex; align-items: stretch; height: 40px; background: #1c1c1c; color: #fff; font: 11px/18px "Open Sans", "Noto Sans", sans-serif; }
.task { position: relative; display: grid; place-items: center; width: 48px; margin-right: 1px; }
.task:first-child { margin-right: 0; }
.task svg { width: 24px; height: 24px; }
.task.running::after { content: ""; position: absolute; left: 4px; right: 4px; bottom: 0; height: 3px; background: #76e8f0; }
.current { background: #4a4a4a; }
.task.current::after { left: 0; right: 0; }
.sep { width: 4px; margin: 12px 13px 12px 5px; border: solid #555; border-width: 0 1px; }
.badge { position: absolute; right: 6px; bottom: 6px; padding: 0 2px; border-radius: 2px; background: #8a8a8a; font-size: 9px; line-height: 11px; }
.tray { display: flex; align-items: center; margin-left: auto; }
.t24 { width: 24px; height: 24px; margin-right: 8px; }
.t12 { width: 12px; height: 12px; margin-right: 10px; }
.t16 { width: 16px; height: 16px; margin-right: 8px; }
.lang { margin: 0 12px 0 3px; font-size: 12px; }
.clock { display: flex; flex-direction: column; align-items: center; margin-right: 18px; }
.note { margin-right: 12px; }
.peek { width: 1px; height: 40px; margin-right: 4px; background: #666; }

/* Hand-drawn remarks over the editor */
.marks { position: absolute; top: 0; left: 0; width: 500px; height: 500px; pointer-events: none; }
.remark { position: absolute; color: #d8272e; font: 13px/18px "Open Sans", sans-serif; }
.object-note { top: 284px; left: 324px; }
.scene-note { top: 414px; left: 376px; }
```
